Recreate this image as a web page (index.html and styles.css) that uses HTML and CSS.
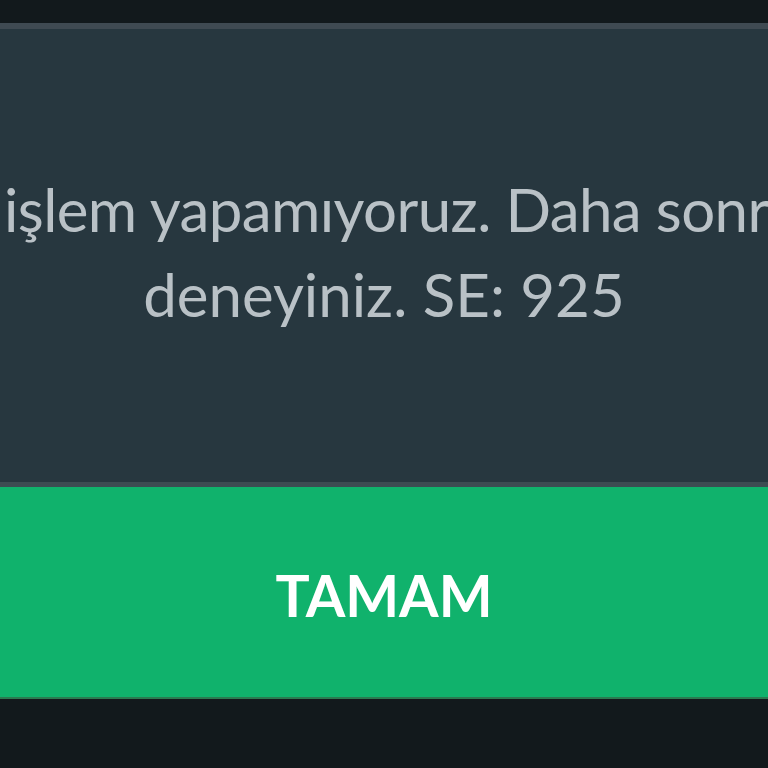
FILE: index.html
```html
<!DOCTYPE html>
<html lang="tr">
<head>
<meta charset="utf-8">
<link rel="stylesheet" href="styles.css">
</head>
<body>
<div class="screen">
  <div class="top"></div>
  <div class="dialog">
    <div class="message">
      <p class="line line-first">işlem yapamıyoruz. Daha sonra</p>
      <p class="line">deneyiniz. SE: 925</p>
    </div>
    <div class="button">TAMAM</div>
  </div>
  <div class="bottom"></div>
</div>
</body>
</html>
```
FILE: styles.css
```css
html, body {
  margin: 0;
  padding: 0;
  background: #12191c;
}
.screen {
  width: 768px;
  height: 768px;
  display: flex;
  flex-direction: column;
  overflow: hidden;
}
.top {
  height: 23px;
  flex: none;
  background: #12191c;
}
.dialog {
  display: flex;
  flex-direction: column;
  border-top: 6px solid #3f4a52;
  flex: none;
}
.message {
  height: 458px;
  background: #27373f;
  display: flex;
  flex-direction: column;
  align-items: center;
  justify-content: flex-start;
  padding-top: 138px;
  box-sizing: border-box;
  border-bottom: 5px solid #3d4c52;
  overflow: hidden;
}
.line {
  margin: 0;
  font-family: Lato, "Noto Sans", sans-serif;
  font-size: 60px;
  line-height: 85px;
  color: #b9c1c6;
  white-space: nowrap;
}
.line-first {
  align-self: flex-start;
  padding-left: 4px;
  letter-spacing: -0.6px;
}
.button {
  height: 212px;
  box-sizing: border-box;
  padding-top: 6px;
  background: #10b26c;
  display: flex;
  align-items: center;
  justify-content: center;
  font-family: Lato, "Noto Sans", sans-serif;
  font-weight: 700;
  font-size: 57px;
  color: #ffffff;
  border-bottom: 2px solid #2a7a50;
}
.bottom {
  flex: 1;
  background: #12191c;
}
```
